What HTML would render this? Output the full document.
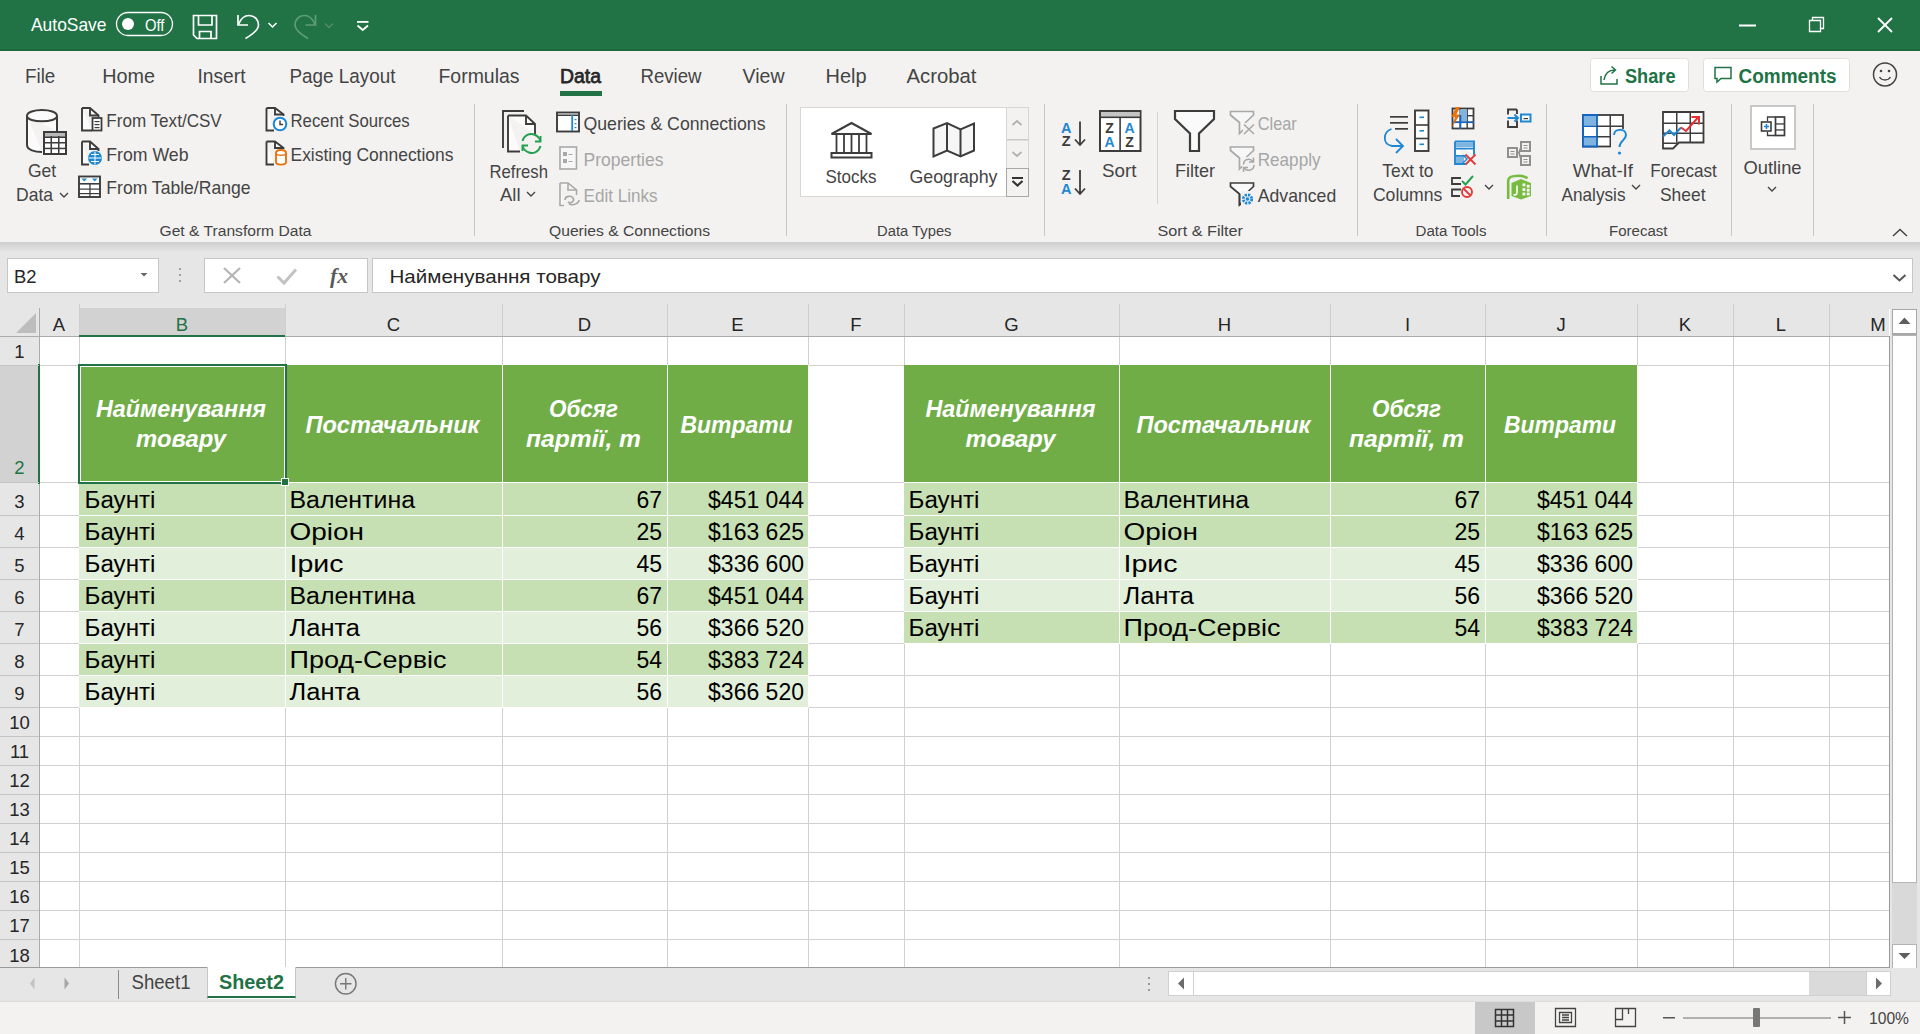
<!DOCTYPE html>
<html><head><meta charset="utf-8"><title>Excel</title>
<style>html,body{margin:0;padding:0;width:1920px;height:1034px;overflow:hidden;background:#fff}
svg{display:block;font-family:"Liberation Sans",sans-serif}</style></head>
<body><svg width="1920" height="1034" viewBox="0 0 1920 1034">
<rect x="0" y="0" width="1920" height="51" fill="#217346" />
<rect x="0" y="49" width="1920" height="2" fill="#1b6a3f" />
<text x="31" y="31" font-size="18.5" fill="#ffffff" textLength="75.5" lengthAdjust="spacingAndGlyphs">AutoSave</text>
<rect x="116.5" y="12.5" width="56" height="23" fill="none" stroke="#ffffff" stroke-width="1.3" rx="11.5" />
<circle cx="128" cy="24" r="6" fill="#ffffff"/>
<text x="145" y="31" font-size="17" fill="#ffffff" textLength="19.5" lengthAdjust="spacingAndGlyphs">Off</text>
<path d="M193.5 15.5 H216.5 V38.5 H197 L193.5 35 Z" stroke="#ffffff" fill="none" stroke-width="1.7" />
<path d="M198.5 15.5 V25 H212 V15.5" stroke="#ffffff" fill="none" stroke-width="1.7" />
<path d="M199.5 38.5 V31.5 H211 V38.5" stroke="#ffffff" fill="none" stroke-width="1.7" />
<path d="M238 15 V25 H248" stroke="#ffffff" fill="none" stroke-width="1.7" />
<path d="M238.5 24.5 C241 18 245 15.5 249 15.5 C255 15.5 258.5 20 258.5 25 C258.5 29 255 33 245.5 38.5" stroke="#ffffff" fill="none" stroke-width="1.7" />
<path d="M268.5 23 L272.5 27 L276.5 23" stroke="#ffffff" fill="none" stroke-width="1.5" />
<path d="M315.5 15 V25 H305.5" stroke="#5e9c77" fill="none" stroke-width="1.7" />
<path d="M315 24.5 C312.5 18 308.5 15.5 304.5 15.5 C298.5 15.5 295 20 295 25 C295 29 298.5 33 308 38.5" stroke="#5e9c77" fill="none" stroke-width="1.7" />
<path d="M325 23.5 L329 27.5 L333 23.5" stroke="#4f8f68" fill="none" stroke-width="1.4" />
<rect x="357" y="21" width="11.5" height="1.8" fill="#ffffff" />
<path d="M357.5 25.5 L362.75 30 L368 25.5" stroke="#ffffff" fill="none" stroke-width="1.8" />
<rect x="1739" y="24.5" width="17" height="2" fill="#ffffff" />
<path d="M1809.5 20.5 H1820.5 V31.5 H1809.5 Z" stroke="#ffffff" fill="none" stroke-width="1.3" />
<path d="M1812.5 20.5 V17.5 H1823.5 V28.5 H1820.5" stroke="#ffffff" fill="none" stroke-width="1.3" />
<path d="M1878 18 L1892 32 M1892 18 L1878 32" stroke="#ffffff" fill="none" stroke-width="1.8" />
<rect x="0" y="51" width="1920" height="191" fill="#f3f2f1" />
<text x="25" y="83" font-size="20.5" fill="#444444" textLength="30.299999999999997" lengthAdjust="spacingAndGlyphs">File</text>
<text x="102.3" y="83" font-size="20.5" fill="#444444" textLength="52.8" lengthAdjust="spacingAndGlyphs">Home</text>
<text x="197.5" y="83" font-size="20.5" fill="#444444" textLength="48.0" lengthAdjust="spacingAndGlyphs">Insert</text>
<text x="289.5" y="83" font-size="20.5" fill="#444444" textLength="106.0" lengthAdjust="spacingAndGlyphs">Page Layout</text>
<text x="438.5" y="83" font-size="20.5" fill="#444444" textLength="81.0" lengthAdjust="spacingAndGlyphs">Formulas</text>
<text x="560" y="83" font-size="20.5" fill="#262626" stroke="#262626" stroke-width="0.75" textLength="41" lengthAdjust="spacingAndGlyphs">Data</text>
<text x="640.5" y="83" font-size="20.5" fill="#444444" textLength="61.0" lengthAdjust="spacingAndGlyphs">Review</text>
<text x="742.5" y="83" font-size="20.5" fill="#444444" textLength="42.0" lengthAdjust="spacingAndGlyphs">View</text>
<text x="825.5" y="83" font-size="20.5" fill="#444444" textLength="41.0" lengthAdjust="spacingAndGlyphs">Help</text>
<text x="906.5" y="83" font-size="20.5" fill="#444444" textLength="70.0" lengthAdjust="spacingAndGlyphs">Acrobat</text>
<rect x="560" y="91" width="42" height="5" fill="#217346" />
<rect x="1590.5" y="58.5" width="98" height="33" fill="#ffffff" stroke="#e1dfdd" stroke-width="1" rx="3" />
<rect x="1703.5" y="58.5" width="146" height="33" fill="#ffffff" stroke="#e1dfdd" stroke-width="1" rx="3" />
<text x="1625" y="83" font-size="20" fill="#217346" font-weight="bold" textLength="50.5" lengthAdjust="spacingAndGlyphs">Share</text>
<text x="1738.5" y="83" font-size="20" fill="#217346" font-weight="bold" textLength="98" lengthAdjust="spacingAndGlyphs">Comments</text>
<path d="M1601 76 V84 H1617 V79" stroke="#217346" fill="none" stroke-width="1.5" />
<path d="M1604 80 C1605 73 1609 70 1615 70 M1611.5 66.5 L1615.5 70 L1611.5 73.5" stroke="#217346" fill="none" stroke-width="1.5" />
<path d="M1715 67.5 H1731 V78.5 H1721 L1717 82 V78.5 H1715 Z" stroke="#217346" fill="none" stroke-width="1.5" />
<circle cx="1885" cy="74.5" r="11.5" fill="none" stroke="#444" stroke-width="1.5"/>
<circle cx="1881" cy="71" r="1.3" fill="#444"/><circle cx="1889" cy="71" r="1.3" fill="#444"/>
<path d="M1879.5 77 C1882 81 1888 81 1890.5 77" stroke="#444" fill="none" stroke-width="1.4" />
<rect x="474" y="104" width="1" height="132" fill="#c8c6c4" />
<rect x="786" y="104" width="1" height="132" fill="#c8c6c4" />
<rect x="1044" y="104" width="1" height="132" fill="#c8c6c4" />
<rect x="1357" y="104" width="1" height="132" fill="#c8c6c4" />
<rect x="1546" y="104" width="1" height="132" fill="#c8c6c4" />
<rect x="1731" y="104" width="1" height="132" fill="#c8c6c4" />
<rect x="1813" y="104" width="1" height="132" fill="#c8c6c4" />
<rect x="1157" y="112" width="1" height="92" fill="#d6d4d2" />
<text x="159.5" y="236" font-size="15.5" fill="#444444" textLength="152" lengthAdjust="spacingAndGlyphs">Get &amp; Transform Data</text>
<text x="549.0" y="236" font-size="15.5" fill="#444444" textLength="161.0" lengthAdjust="spacingAndGlyphs">Queries &amp; Connections</text>
<text x="877.0" y="236" font-size="15.5" fill="#444444" textLength="74.5" lengthAdjust="spacingAndGlyphs">Data Types</text>
<text x="1157.5" y="236" font-size="15.5" fill="#444444" textLength="85.5" lengthAdjust="spacingAndGlyphs">Sort &amp; Filter</text>
<text x="1415.5" y="236" font-size="15.5" fill="#444444" textLength="71" lengthAdjust="spacingAndGlyphs">Data Tools</text>
<text x="1609.0" y="236" font-size="15.5" fill="#444444" textLength="58.5" lengthAdjust="spacingAndGlyphs">Forecast</text>
<path d="M1893 236 L1900 229.5 L1907 236" stroke="#444" fill="none" stroke-width="1.5" />
<text x="16" y="200.5" font-size="19" fill="#444444" textLength="37.0" lengthAdjust="spacingAndGlyphs">Data</text>
<text x="28" y="176.6" font-size="19" fill="#444444" textLength="28.200000000000003" lengthAdjust="spacingAndGlyphs">Get</text>
<path d="M60 193 L64 197 L68 193" stroke="#444444" fill="none" stroke-width="1.4" />
<text x="106.3" y="127" font-size="19" fill="#444444" textLength="115.45" lengthAdjust="spacingAndGlyphs">From Text/CSV</text>
<text x="106.3" y="160.5" font-size="19" fill="#444444" textLength="82.2" lengthAdjust="spacingAndGlyphs">From Web</text>
<text x="106.3" y="194" font-size="19" fill="#444444" textLength="144.2" lengthAdjust="spacingAndGlyphs">From Table/Range</text>
<text x="290.5" y="127" font-size="19" fill="#444444" textLength="119.25" lengthAdjust="spacingAndGlyphs">Recent Sources</text>
<text x="290.5" y="160.5" font-size="19" fill="#444444" textLength="163.0" lengthAdjust="spacingAndGlyphs">Existing Connections</text>
<text x="489.5" y="178" font-size="19" fill="#444444" textLength="58.5" lengthAdjust="spacingAndGlyphs">Refresh</text>
<text x="500" y="201" font-size="19" fill="#444444" textLength="20.5" lengthAdjust="spacingAndGlyphs">All</text>
<path d="M527 192 L531 196 L535 192" stroke="#444444" fill="none" stroke-width="1.4" />
<text x="583.5" y="130" font-size="19" fill="#444444" textLength="182.0" lengthAdjust="spacingAndGlyphs">Queries &amp; Connections</text>
<text x="583.5" y="166" font-size="19" fill="#a6a6a6" textLength="80.0" lengthAdjust="spacingAndGlyphs">Properties</text>
<text x="583.5" y="202" font-size="19" fill="#a6a6a6" textLength="74.0" lengthAdjust="spacingAndGlyphs">Edit Links</text>
<rect x="800.5" y="107.5" width="206" height="89" fill="#ffffff" stroke="#d6d6d6" stroke-width="1" />
<rect x="1006.5" y="107.5" width="22" height="89" fill="#f3f2f1" stroke="#d6d6d6" stroke-width="1" />
<rect x="1007" y="139" width="21" height="1.5" fill="#c8c8c8" />
<rect x="1006.5" y="168.5" width="22" height="28" fill="#f3f2f1" stroke="#a8a8a8" stroke-width="1" />
<path d="M1012.5 125 L1017 121 L1021.5 125" stroke="#b0b0b0" fill="none" stroke-width="1.7" />
<path d="M1012.5 152 L1017 156 L1021.5 152" stroke="#b0b0b0" fill="none" stroke-width="1.7" />
<rect x="1012" y="177" width="11" height="2" fill="#333" />
<path d="M1012.5 181 L1017.5 185.5 L1022.5 181" stroke="#333" fill="none" stroke-width="2.2" />
<text x="825.5" y="182.6" font-size="19" fill="#444444" textLength="51.0" lengthAdjust="spacingAndGlyphs">Stocks</text>
<text x="909.5" y="182.6" font-size="19" fill="#444444" textLength="88.0" lengthAdjust="spacingAndGlyphs">Geography</text>
<text x="1102" y="176.75" font-size="19" fill="#444444" textLength="34.5" lengthAdjust="spacingAndGlyphs">Sort</text>
<text x="1175" y="176.75" font-size="19" fill="#444444" textLength="40.0" lengthAdjust="spacingAndGlyphs">Filter</text>
<text x="1257.75" y="130" font-size="19" fill="#a6a6a6" textLength="39.0" lengthAdjust="spacingAndGlyphs">Clear</text>
<text x="1257.75" y="166" font-size="19" fill="#a6a6a6" textLength="62.75" lengthAdjust="spacingAndGlyphs">Reapply</text>
<text x="1257.75" y="202" font-size="19" fill="#444444" textLength="78.5" lengthAdjust="spacingAndGlyphs">Advanced</text>
<text x="1382.3" y="176.7" font-size="19" fill="#444444" textLength="51.200000000000045" lengthAdjust="spacingAndGlyphs">Text to</text>
<text x="1372.9" y="200.5" font-size="19" fill="#444444" textLength="69.5" lengthAdjust="spacingAndGlyphs">Columns</text>
<path d="M1485 185 L1489 189 L1493 185" stroke="#444444" fill="none" stroke-width="1.4" />
<text x="1572.75" y="177" font-size="19" fill="#444444" textLength="60.25" lengthAdjust="spacingAndGlyphs">What-If</text>
<text x="1561.5" y="201" font-size="19" fill="#444444" textLength="64.0" lengthAdjust="spacingAndGlyphs">Analysis</text>
<path d="M1632 185 L1636 189 L1640 185" stroke="#444444" fill="none" stroke-width="1.4" />
<text x="1650.25" y="177" font-size="19" fill="#444444" textLength="66.5" lengthAdjust="spacingAndGlyphs">Forecast</text>
<text x="1660" y="201" font-size="19" fill="#444444" textLength="45.5" lengthAdjust="spacingAndGlyphs">Sheet</text>
<rect x="1751" y="106" width="44" height="43" fill="#ffffff" stroke="#c8c8c8" stroke-width="2" />
<text x="1743.5" y="174.25" font-size="19" fill="#444444" textLength="58.0" lengthAdjust="spacingAndGlyphs">Outline</text>
<path d="M1768 187 L1772 191 L1776 187" stroke="#444444" fill="none" stroke-width="1.4" />
<path d="M27 116 V145 C27 150 35 152 42 152" stroke="#3c3c3c" fill="#fbfbfb" stroke-width="2" />
<path d="M27 116 C27 108 57 108 57 116 V131" stroke="#3c3c3c" fill="#fbfbfb" stroke-width="2" />
<path d="M27 116 C27 123 57 123 57 116" stroke="#3c3c3c" fill="none" stroke-width="2" />
<rect x="44" y="132" width="22" height="22" fill="#ffffff" stroke="#3c3c3c" stroke-width="2" />
<rect x="45" y="133" width="20" height="4" fill="#b9b9b9" />
<rect x="50.5" y="136" width="1.5" height="18" fill="#3c3c3c" />
<rect x="58" y="136" width="1.5" height="18" fill="#3c3c3c" />
<rect x="44" y="136.5" width="22" height="1.5" fill="#3c3c3c" />
<rect x="44" y="142" width="22" height="1.5" fill="#3c3c3c" />
<rect x="44" y="147.7" width="22" height="1.5" fill="#3c3c3c" />
<path d="M98.5 116 V108 " stroke="none" fill="none" stroke-width="1.5" />
<path d="M82 108 H90 L98.5 115.5 V117 M82 108 V130.5 H92" stroke="#3c3c3c" fill="#fbfbfb" stroke-width="1.9" />
<path d="M90 108 V115.5 H98.5" stroke="#3c3c3c" fill="none" stroke-width="1.9" />
<rect x="92.5" y="118" width="9" height="12.5" fill="#ffffff" stroke="#3c3c3c" stroke-width="1.8" />
<rect x="94.5" y="121" width="5.0" height="1.2" fill="#3c3c3c" />
<rect x="94.5" y="124" width="5.0" height="1.2" fill="#3c3c3c" />
<rect x="94.5" y="127" width="5.0" height="1.2" fill="#3c3c3c" />
<path d="M82 141.5 H90 L98.5 149 V151 M82 141.5 V164.5 H89" stroke="#3c3c3c" fill="#fbfbfb" stroke-width="1.9" />
<path d="M90 141.5 V149 H98.5" stroke="#3c3c3c" fill="none" stroke-width="1.9" />
<circle cx="95" cy="158" r="7" fill="#1e88d2"/>
<path d="M88.5 158 H101.5 M95 151.5 V164.5 M91 154.5 H99 M91 161.5 H99" stroke="#ffffff" fill="none" stroke-width="1" />
<rect x="79" y="176.5" width="21" height="20.5" fill="#ffffff" stroke="#3c3c3c" stroke-width="1.9" />
<rect x="79" y="183" width="21" height="1.6" fill="#3c3c3c" />
<rect x="79" y="188.5" width="21" height="1.2" fill="#3c3c3c" />
<rect x="79" y="193" width="21" height="1.2" fill="#3c3c3c" />
<rect x="89.3" y="183" width="1.3" height="14" fill="#3c3c3c" />
<path d="M81.5 178.5 H87 L84.25 181.5 Z" stroke="none" fill="#1e88d2" stroke-width="1.5" />
<path d="M92 178.5 H97.5 L94.75 181.5 Z" stroke="none" fill="#1e88d2" stroke-width="1.5" />
<path d="M266.5 108 H275 L283.5 114.5 V116 M266.5 108 V130.5 H274" stroke="#3c3c3c" fill="#fbfbfb" stroke-width="1.9" />
<path d="M275 108 V114.5 H283.5" stroke="#3c3c3c" fill="none" stroke-width="1.9" />
<circle cx="280" cy="124" r="6.3" fill="#ffffff" stroke="#1e88d2" stroke-width="2"/>
<path d="M280 120.5 V124.5 H283" stroke="#3c3c3c" fill="none" stroke-width="1.4" />
<path d="M266.5 141.5 H275 L283.5 148 V149 M266.5 141.5 V164.5 H274" stroke="#3c3c3c" fill="#fbfbfb" stroke-width="1.9" />
<path d="M275 141.5 V148 H283.5" stroke="#3c3c3c" fill="none" stroke-width="1.9" />
<path d="M276 153 C276 149 286 149 286 153 V162 C286 165.5 276 165.5 276 162 Z" stroke="#e8730f" fill="#ffffff" stroke-width="1.9" />
<path d="M276 153 C276 156 286 156 286 153" stroke="#e8730f" fill="none" stroke-width="1.5" />
<path d="M503 148 V111 H524" stroke="#3c3c3c" fill="none" stroke-width="1.9" />
<path d="M508 115.5 H526 L535 124 V134 M508 115.5 V151.5 H520" stroke="#3c3c3c" fill="#fbfbfb" stroke-width="1.9" />
<path d="M526 115.5 V124 H535" stroke="#3c3c3c" fill="none" stroke-width="1.9" />
<circle cx="531.5" cy="143.5" r="9.5" fill="#f3f2f1"/>
<path d="M522.5 141 C524 135 530 133 534 134.5 C537 135.5 539.5 138 540.5 141" stroke="#23a04f" fill="none" stroke-width="1.9" />
<path d="M540.5 136 V141.5 H535" stroke="#23a04f" fill="none" stroke-width="1.9" />
<path d="M540.5 146 C539 152 533 154 529 152.5 C526 151.5 523.5 149 522.5 146" stroke="#23a04f" fill="none" stroke-width="1.9" />
<path d="M522.5 151 V145.5 H528" stroke="#23a04f" fill="none" stroke-width="1.9" />
<rect x="557" y="112.5" width="22" height="19" fill="#ffffff" stroke="#3c3c3c" stroke-width="1.9" />
<rect x="557" y="114.5" width="22" height="1.5" fill="#3c3c3c" />
<rect x="571.3" y="115" width="1.8" height="16" fill="#1e88d2" />
<rect x="574.5" y="119" width="2" height="1.2" fill="#1e88d2" />
<rect x="574.5" y="123" width="2" height="1.2" fill="#1e88d2" />
<rect x="574.5" y="127" width="2" height="1.2" fill="#1e88d2" />
<rect x="560" y="147" width="16.5" height="22" fill="#f7f7f7" stroke="#a8a8a8" stroke-width="1.6" />
<rect x="563" y="152" width="4" height="4" fill="#a8a8a8" />
<rect x="563" y="159" width="4" height="4" fill="#a8a8a8" />
<rect x="568.5" y="154" width="4.0" height="1" fill="#a8a8a8" />
<rect x="568.5" y="161" width="4.0" height="1" fill="#a8a8a8" />
<path d="M560 183 H568 L576.5 190 V195 M560 183 V205.5 H564" stroke="#a8a8a8" fill="#f7f7f7" stroke-width="1.6" />
<path d="M568 183 V190 H576.5" stroke="#a8a8a8" fill="none" stroke-width="1.6" />
<path d="M565 200 C565 196 571 195 573 198 C575 201 571 204 568 202 M569 204 C574 206 579 203 579 200" stroke="#a8a8a8" fill="none" stroke-width="1.6" />
<path d="M831.5 134 L851.5 123 L871.5 134 Z" stroke="#3c3c3c" fill="#ffffff" stroke-width="2" />
<rect x="835.6" y="135" width="1.8" height="17.5" fill="#3c3c3c" />
<rect x="843.1" y="135" width="1.8" height="17.5" fill="#3c3c3c" />
<rect x="850.6" y="135" width="1.8" height="17.5" fill="#3c3c3c" />
<rect x="858.1" y="135" width="1.8" height="17.5" fill="#3c3c3c" />
<rect x="865.6" y="135" width="1.8" height="17.5" fill="#3c3c3c" />
<path d="M831.5 153 H871.5 V157.5 H831.5 Z" stroke="#3c3c3c" fill="#ffffff" stroke-width="2" />
<path d="M933.5 128.5 L947 123 L960.5 129.5 L974 123.5 V150.5 L960.5 156.5 L947 150.5 L933.5 156.5 Z" stroke="#3c3c3c" fill="#f6f6f6" stroke-width="2" />
<path d="M947 123 V150.5 M960.5 129.5 V156.5" stroke="#3c3c3c" fill="none" stroke-width="2" />
<text x="1066.3" y="132.6" font-size="14.5" fill="#1e88d2" font-weight="bold" text-anchor="middle">A</text>
<text x="1066.3" y="145.5" font-size="14.5" fill="#3c3c3c" font-weight="bold" text-anchor="middle">Z</text>
<path d="M1080 121.5 V145 M1075 139.5 L1080 145 L1085 139.5" stroke="#3c3c3c" fill="none" stroke-width="1.8" />
<text x="1066.3" y="180.4" font-size="14.5" fill="#3c3c3c" font-weight="bold" text-anchor="middle">Z</text>
<text x="1066.3" y="193.7" font-size="14.5" fill="#1e88d2" font-weight="bold" text-anchor="middle">A</text>
<path d="M1080 170 V194 M1075 188.5 L1080 194 L1085 188.5" stroke="#3c3c3c" fill="none" stroke-width="1.8" />
<rect x="1100" y="111" width="40.5" height="40" fill="#ffffff" stroke="#3c3c3c" stroke-width="2" />
<rect x="1101" y="112" width="38.5" height="5" fill="#c4c4c4" />
<rect x="1100" y="116.5" width="41" height="1.6" fill="#3c3c3c" />
<rect x="1119.3" y="117" width="1.6" height="34" fill="#3c3c3c" />
<text x="1109.5" y="132.5" font-size="14" fill="#3c3c3c" font-weight="bold" text-anchor="middle">Z</text>
<text x="1109.5" y="147.3" font-size="14" fill="#1e88d2" font-weight="bold" text-anchor="middle">A</text>
<text x="1129.5" y="132.5" font-size="14" fill="#1e88d2" font-weight="bold" text-anchor="middle">A</text>
<text x="1129.5" y="147.3" font-size="14" fill="#3c3c3c" font-weight="bold" text-anchor="middle">Z</text>
<path d="M1175 111 H1214 V119 L1199 133.5 V151 H1190 V133.5 L1175 119 Z" stroke="#3c3c3c" fill="#fafafa" stroke-width="2.2" />
<path d="M1230.5 111.5 H1253.5 V115.0 L1245.5 122.5 V127.5 L1239.5 133.5 V122.5 L1230.5 115.0 Z" stroke="#a8a8a8" fill="#f7f7f7" stroke-width="1.7" />
<rect x="1243" y="123" width="12" height="12" fill="#f3f2f1" />
<path d="M1244 124.5 L1254 134 M1254 124.5 L1244 134" stroke="#a8a8a8" fill="none" stroke-width="1.6" />
<path d="M1230.5 147 H1253.5 V150.5 L1245.5 158 V163 L1239.5 169 V158 L1230.5 150.5 Z" stroke="#a8a8a8" fill="#f7f7f7" stroke-width="1.7" />
<rect x="1242" y="157" width="13" height="14" fill="#f3f2f1" />
<path d="M1243.5 164.5 C1243.5 159 1250 157.5 1253 161.5 M1253.5 157.5 V162 H1249" stroke="#a8a8a8" fill="none" stroke-width="1.5" />
<path d="M1254 165 C1254 170.5 1247 172 1244 168 M1243.5 172 V167.5 H1248" stroke="#a8a8a8" fill="none" stroke-width="1.5" />
<path d="M1230.5 183 H1253.5 V186.5 L1245.5 194 V199 L1239.5 205 V194 L1230.5 186.5 Z" stroke="#3c3c3c" fill="#fafafa" stroke-width="1.7" />
<rect x="1241" y="191" width="14" height="15" fill="#f3f2f1"/>
<path d="M1239.5 194 V205.5" stroke="#3c3c3c" fill="none" stroke-width="1.7" />
<circle cx="1247.5" cy="199" r="4.2" fill="none" stroke="#1e88d2" stroke-width="2.8" stroke-dasharray="2.2 1.1"/>
<circle cx="1247.5" cy="199" r="1.8" fill="#1e88d2"/>
<rect x="1390" y="116" width="18" height="1.7" fill="#3c3c3c" />
<rect x="1390" y="122" width="18" height="1.7" fill="#3c3c3c" />
<rect x="1395" y="128" width="13" height="1.7" fill="#3c3c3c" />
<rect x="1415" y="110.5" width="13.5" height="40.5" fill="#ffffff" stroke="#3c3c3c" stroke-width="1.9" />
<rect x="1415" y="124.2" width="13.5" height="1.6" fill="#3c3c3c" />
<rect x="1415" y="137.7" width="13.5" height="1.6" fill="#3c3c3c" />
<rect x="1419.5" y="116.5" width="4.5" height="1.6" fill="#1e88d2" />
<rect x="1419.5" y="130" width="4.5" height="1.6" fill="#1e88d2" />
<rect x="1419.5" y="143.5" width="4.5" height="1.6" fill="#1e88d2" />
<path d="M1391.5 129 C1383 132 1382 144 1392 146 H1402.5" stroke="#1e88d2" fill="none" stroke-width="1.8" />
<path d="M1396 139 L1403 146 L1396 153" stroke="#1e88d2" fill="none" stroke-width="1.8" />
<rect x="1452.5" y="108.5" width="21" height="20" fill="#ffffff" stroke="#3c3c3c" stroke-width="1.8" />
<rect x="1459.5" y="108" width="1.4" height="21" fill="#3c3c3c" />
<rect x="1466.5" y="108" width="1.4" height="21" fill="#3c3c3c" />
<rect x="1452" y="115" width="22" height="1.4" fill="#3c3c3c" />
<rect x="1452" y="121.5" width="22" height="1.4" fill="#3c3c3c" />
<path d="M1460 109.5 H1467 V121.5 H1460 Z" stroke="none" fill="#7fb3e0" stroke-width="1.5" />
<rect x="1459.5" y="115" width="1.8" height="14" fill="#1565c0" />
<rect x="1452" y="121.5" width="22" height="1.6" fill="#1565c0" />
<path d="M1456 107 L1451.5 117 H1455 L1452 127 L1460 114.5 H1456.5 L1460 107 Z" stroke="none" fill="#e8730f" stroke-width="1.5" />
<path d="M1455 141.5 H1474 V155 M1455 141.5 V164 H1466" stroke="#1e88d2" fill="#ffffff" stroke-width="1.9" />
<rect x="1456" y="142.5" width="17" height="5" fill="#7fb3e0" />
<rect x="1456" y="155" width="8" height="8" fill="#7fb3e0" />
<rect x="1455" y="148" width="19" height="1.5" fill="#1e88d2" />
<rect x="1455" y="155" width="11" height="1.5" fill="#1e88d2" />
<path d="M1463 155 L1467 159 L1463 163" stroke="#1e88d2" fill="none" stroke-width="1.4" />
<path d="M1465.5 154.5 L1475.5 164.5 M1475.5 154.5 L1465.5 164.5" stroke="#e23b3b" fill="none" stroke-width="1.8" />
<path d="M1461 178 H1452 V184 H1461 M1461 189.5 H1452 V196 H1460" stroke="#3c3c3c" fill="none" stroke-width="1.8" />
<path d="M1462 181 L1465.5 184.5 L1473 176" stroke="#23a04f" fill="none" stroke-width="1.9" />
<circle cx="1467" cy="192" r="5" fill="none" stroke="#e23b3b" stroke-width="1.9"/>
<path d="M1463.5 188.5 L1470.5 195.5" stroke="#e23b3b" fill="none" stroke-width="1.8" />
<path d="M1517 109.5 H1508 V114.5 M1508 120.5 V127 H1517 V120.5 M1517 109.5 V114" stroke="#3c3c3c" fill="none" stroke-width="1.9" />
<path d="M1507.5 118 H1518 M1514.5 114.5 L1518 118 L1514.5 121.5" stroke="#1e88d2" fill="none" stroke-width="2" />
<rect x="1521" y="114.5" width="9.5" height="7" fill="#ffffff" stroke="#1e88d2" stroke-width="2" />
<rect x="1523.5" y="118" width="4.5" height="1.2" fill="#3c3c3c" />
<rect x="1508" y="148" width="9" height="9" fill="none" stroke="#8f8f8f" stroke-width="2" />
<rect x="1521" y="142" width="9" height="9" fill="none" stroke="#8f8f8f" stroke-width="2" />
<rect x="1521" y="156" width="9" height="9" fill="none" stroke="#8f8f8f" stroke-width="2" />
<path d="M1517 152.5 H1519 L1521 147 M1519 152.5 L1521 160" stroke="#8f8f8f" fill="none" stroke-width="1.6" />
<rect x="1510.5" y="151" width="4.0" height="1" fill="#8f8f8f" />
<rect x="1510.5" y="153.5" width="4.0" height="1" fill="#8f8f8f" />
<rect x="1523.5" y="145" width="4.0" height="1" fill="#8f8f8f" />
<rect x="1523.5" y="147.5" width="4.0" height="1" fill="#8f8f8f" />
<rect x="1523.5" y="159" width="4.0" height="1" fill="#8f8f8f" />
<rect x="1523.5" y="161.5" width="4.0" height="1" fill="#8f8f8f" />
<path d="M1508.2 199 V180.5 C1508.2 177 1513 175.8 1518.5 175.8 C1522.5 175.8 1525.5 176.8 1527.5 178.2" stroke="#77bb41" fill="none" stroke-width="2.6" />
<path d="M1511.5 183 L1521 179 L1531 183 V196 L1521 199.5 L1511.5 196 Z" stroke="none" fill="#77bb41" stroke-width="1.5" />
<rect x="1522.5" y="183.5" width="2.8" height="2.8" fill="#ffffff" />
<rect x="1526.8" y="184.8" width="2.8" height="2.8" fill="#ffffff" />
<rect x="1522.5" y="188.2" width="2.8" height="2.8" fill="#ffffff" />
<rect x="1526.8" y="188.8" width="2.8" height="2.8" fill="#ffffff" />
<rect x="1522.5" y="192.6" width="2.8" height="2.8" fill="#ffffff" />
<rect x="1526.8" y="192.6" width="2.8" height="2.8" fill="#ffffff" />
<path d="M1517 185.5 V192.5 C1517 195 1514.5 195.5 1513.5 194.5" stroke="#ffffff" fill="none" stroke-width="1.6" />
<rect x="1583" y="115" width="40" height="31.5" fill="#ffffff" stroke="#3c3c3c" stroke-width="1.8" />
<rect x="1583" y="115" width="14" height="10.5" fill="#7fb3e0" />
<rect x="1583" y="136" width="14" height="10.5" fill="#7fb3e0" />
<path d="M1583 115 H1597 V146.5 H1583 Z" stroke="#1565c0" fill="none" stroke-width="1.8" />
<rect x="1597" y="125.5" width="26" height="1.5" fill="#3c3c3c" />
<rect x="1597" y="136" width="26" height="1.5" fill="#3c3c3c" />
<rect x="1609.5" y="115" width="1.5" height="31.5" fill="#3c3c3c" />
<rect x="1583" y="125.5" width="14" height="1.5" fill="#1565c0" />
<rect x="1583" y="136" width="14" height="1.5" fill="#1565c0" />
<rect x="1611" y="129" width="17" height="27" fill="#f3f2f1"/>
<path d="M1614 135 C1614 128 1626 128 1626 135 C1626 140 1619.5 141 1619.5 147" stroke="#1e88d2" fill="none" stroke-width="2" />
<circle cx="1619.5" cy="153" r="1.6" fill="#1e88d2"/>
<path d="M1663 112 H1703.5 V142.5 H1679 L1673 148.5 H1663 Z" stroke="#3c3c3c" fill="#ffffff" stroke-width="1.8" />
<rect x="1676" y="112" width="1.5" height="30.5" fill="#3c3c3c" />
<rect x="1689.5" y="112" width="1.5" height="30.5" fill="#3c3c3c" />
<rect x="1663" y="122.5" width="40.5" height="1.5" fill="#3c3c3c" />
<rect x="1663" y="132.5" width="40.5" height="1.5" fill="#3c3c3c" />
<rect x="1663" y="142.5" width="16" height="1.5" fill="#3c3c3c" />
<path d="M1663 136.5 L1669.5 130.5 L1674 135 L1681 127.5" stroke="#1e88d2" fill="none" stroke-width="2" />
<path d="M1681 127.5 L1686 131 L1698 117.5" stroke="#e83030" fill="none" stroke-width="2" />
<path d="M1691.5 117 H1699 V124.5" stroke="#e83030" fill="none" stroke-width="2" />
<rect x="1761.5" y="122" width="9.5" height="9" fill="#ffffff" stroke="#3c3c3c" stroke-width="1.6" />
<path d="M1764 126.5 H1769 M1766.5 124 V129" stroke="#1e88d2" fill="none" stroke-width="1.6" />
<path d="M1775 117 H1767.5 V121 M1767.5 132 V135.5 H1775" stroke="#3c3c3c" fill="none" stroke-width="1.3" />
<rect x="1775.5" y="117" width="9" height="18.5" fill="#ffffff" stroke="#3c3c3c" stroke-width="1.7" />
<rect x="1775" y="123.3" width="10" height="1.3" fill="#3c3c3c" />
<rect x="1775" y="129.3" width="10" height="1.3" fill="#3c3c3c" />
<rect x="0" y="242" width="1920" height="67" fill="#e6e6e6" />
<defs><linearGradient id="sh" x1="0" y1="0" x2="0" y2="1"><stop offset="0" stop-color="#cfcfcf"/><stop offset="1" stop-color="#e6e6e6"/></linearGradient></defs>
<rect x="0" y="242" width="1920" height="11" fill="url(#sh)" />
<rect x="7.5" y="258.5" width="151" height="34" fill="#ffffff" stroke="#c6c6c6" stroke-width="1" />
<rect x="204.5" y="258.5" width="163" height="34" fill="#ffffff" stroke="#c6c6c6" stroke-width="1" />
<rect x="372.5" y="258.5" width="1540" height="34" fill="#ffffff" stroke="#c6c6c6" stroke-width="1" />
<text x="14" y="283" font-size="18" fill="#262626" textLength="22.5" lengthAdjust="spacingAndGlyphs">B2</text>
<path d="M140.5 273 H147.5 L144 276.5 Z" stroke="none" fill="#666" stroke-width="1.5" />
<rect x="179" y="268" width="2" height="2" fill="#a0a0a0" />
<rect x="179" y="274" width="2" height="2" fill="#a0a0a0" />
<rect x="179" y="280" width="2" height="2" fill="#a0a0a0" />
<path d="M224 268 L240 283 M240 268 L224 283" stroke="#b4b4b4" fill="none" stroke-width="2.2" />
<path d="M277.5 276.5 L284 283 L296 269.5" stroke="#c2c2c2" fill="none" stroke-width="3" />
<text x="330" y="283" font-size="21" fill="#5a5a5a" font-family="Liberation Serif" font-weight="bold" font-style="italic" textLength="18" lengthAdjust="spacingAndGlyphs">fx</text>
<text x="389.5" y="283" font-size="18.5" fill="#262626" textLength="211" lengthAdjust="spacingAndGlyphs">Найменування товару</text>
<path d="M1893.5 275 L1899.5 280.5 L1905.5 275" stroke="#555" fill="none" stroke-width="2" />
<rect x="40" y="337" width="1849" height="630" fill="#ffffff" />
<rect x="0" y="308" width="1889" height="28" fill="#e6e6e6" />
<rect x="80" y="308" width="205" height="28" fill="#d2d2d2" />
<path d="M16 333 L36 313 L36 333 Z" stroke="none" fill="#bdbdbd" stroke-width="1.5" />
<rect x="79" y="304" width="1" height="32" fill="#cfcfcf" />
<rect x="285" y="304" width="1" height="32" fill="#cfcfcf" />
<rect x="502" y="304" width="1" height="32" fill="#cfcfcf" />
<rect x="667" y="304" width="1" height="32" fill="#cfcfcf" />
<rect x="808" y="304" width="1" height="32" fill="#cfcfcf" />
<rect x="904" y="304" width="1" height="32" fill="#cfcfcf" />
<rect x="1119" y="304" width="1" height="32" fill="#cfcfcf" />
<rect x="1330" y="304" width="1" height="32" fill="#cfcfcf" />
<rect x="1485" y="304" width="1" height="32" fill="#cfcfcf" />
<rect x="1637" y="304" width="1" height="32" fill="#cfcfcf" />
<rect x="1733" y="304" width="1" height="32" fill="#cfcfcf" />
<rect x="1829" y="304" width="1" height="32" fill="#cfcfcf" />
<rect x="39" y="308" width="1" height="659" fill="#ababab" />
<rect x="0" y="336" width="1889" height="1" fill="#ababab" />
<text x="59.0" y="330.5" font-size="18.5" fill="#262626" text-anchor="middle">A</text>
<text x="182.0" y="330.5" font-size="18.5" fill="#217346" text-anchor="middle">B</text>
<text x="393.5" y="330.5" font-size="18.5" fill="#262626" text-anchor="middle">C</text>
<text x="584.5" y="330.5" font-size="18.5" fill="#262626" text-anchor="middle">D</text>
<text x="737.5" y="330.5" font-size="18.5" fill="#262626" text-anchor="middle">E</text>
<text x="856.0" y="330.5" font-size="18.5" fill="#262626" text-anchor="middle">F</text>
<text x="1011.5" y="330.5" font-size="18.5" fill="#262626" text-anchor="middle">G</text>
<text x="1224.5" y="330.5" font-size="18.5" fill="#262626" text-anchor="middle">H</text>
<text x="1407.5" y="330.5" font-size="18.5" fill="#262626" text-anchor="middle">I</text>
<text x="1561.0" y="330.5" font-size="18.5" fill="#262626" text-anchor="middle">J</text>
<text x="1685.0" y="330.5" font-size="18.5" fill="#262626" text-anchor="middle">K</text>
<text x="1781.0" y="330.5" font-size="18.5" fill="#262626" text-anchor="middle">L</text>
<text x="1878" y="330.5" font-size="18.5" fill="#262626" text-anchor="middle">M</text>
<rect x="79" y="335" width="206" height="2" fill="#217346" />
<rect x="0" y="337" width="39" height="630" fill="#e6e6e6" />
<rect x="0" y="366" width="39" height="116" fill="#d2d2d2" />
<rect x="38" y="364" width="2" height="120" fill="#217346" />
<rect x="0" y="365" width="39" height="1" fill="#c4c4c4" />
<text x="19.5" y="357.5" font-size="18.5" fill="#262626" text-anchor="middle">1</text>
<rect x="0" y="482" width="39" height="1" fill="#c4c4c4" />
<text x="19.5" y="474" font-size="18.5" fill="#217346" text-anchor="middle">2</text>
<rect x="0" y="515" width="39" height="1" fill="#c4c4c4" />
<text x="19.5" y="507.5" font-size="18.5" fill="#262626" text-anchor="middle">3</text>
<rect x="0" y="547" width="39" height="1" fill="#c4c4c4" />
<text x="19.5" y="539.5" font-size="18.5" fill="#262626" text-anchor="middle">4</text>
<rect x="0" y="579" width="39" height="1" fill="#c4c4c4" />
<text x="19.5" y="571.5" font-size="18.5" fill="#262626" text-anchor="middle">5</text>
<rect x="0" y="611" width="39" height="1" fill="#c4c4c4" />
<text x="19.5" y="603.5" font-size="18.5" fill="#262626" text-anchor="middle">6</text>
<rect x="0" y="643" width="39" height="1" fill="#c4c4c4" />
<text x="19.5" y="635.5" font-size="18.5" fill="#262626" text-anchor="middle">7</text>
<rect x="0" y="675" width="39" height="1" fill="#c4c4c4" />
<text x="19.5" y="667.5" font-size="18.5" fill="#262626" text-anchor="middle">8</text>
<rect x="0" y="707" width="39" height="1" fill="#c4c4c4" />
<text x="19.5" y="699.5" font-size="18.5" fill="#262626" text-anchor="middle">9</text>
<rect x="0" y="736" width="39" height="1" fill="#c4c4c4" />
<text x="19.5" y="728.5" font-size="18.5" fill="#262626" text-anchor="middle">10</text>
<rect x="0" y="765" width="39" height="1" fill="#c4c4c4" />
<text x="19.5" y="757.5" font-size="18.5" fill="#262626" text-anchor="middle">11</text>
<rect x="0" y="794" width="39" height="1" fill="#c4c4c4" />
<text x="19.5" y="786.5" font-size="18.5" fill="#262626" text-anchor="middle">12</text>
<rect x="0" y="823" width="39" height="1" fill="#c4c4c4" />
<text x="19.5" y="815.5" font-size="18.5" fill="#262626" text-anchor="middle">13</text>
<rect x="0" y="852" width="39" height="1" fill="#c4c4c4" />
<text x="19.5" y="844.5" font-size="18.5" fill="#262626" text-anchor="middle">14</text>
<rect x="0" y="881" width="39" height="1" fill="#c4c4c4" />
<text x="19.5" y="873.5" font-size="18.5" fill="#262626" text-anchor="middle">15</text>
<rect x="0" y="910" width="39" height="1" fill="#c4c4c4" />
<text x="19.5" y="902.5" font-size="18.5" fill="#262626" text-anchor="middle">16</text>
<rect x="0" y="939" width="39" height="1" fill="#c4c4c4" />
<text x="19.5" y="931.5" font-size="18.5" fill="#262626" text-anchor="middle">17</text>
<text x="19.5" y="962" font-size="18.5" fill="#262626" text-anchor="middle">18</text>
<rect x="40" y="365" width="1849" height="1" fill="#d0d0d0" />
<rect x="40" y="482" width="1849" height="1" fill="#d0d0d0" />
<rect x="40" y="515" width="1849" height="1" fill="#d0d0d0" />
<rect x="40" y="547" width="1849" height="1" fill="#d0d0d0" />
<rect x="40" y="579" width="1849" height="1" fill="#d0d0d0" />
<rect x="40" y="611" width="1849" height="1" fill="#d0d0d0" />
<rect x="40" y="643" width="1849" height="1" fill="#d0d0d0" />
<rect x="40" y="675" width="1849" height="1" fill="#d0d0d0" />
<rect x="40" y="707" width="1849" height="1" fill="#d0d0d0" />
<rect x="40" y="736" width="1849" height="1" fill="#d0d0d0" />
<rect x="40" y="765" width="1849" height="1" fill="#d0d0d0" />
<rect x="40" y="794" width="1849" height="1" fill="#d0d0d0" />
<rect x="40" y="823" width="1849" height="1" fill="#d0d0d0" />
<rect x="40" y="852" width="1849" height="1" fill="#d0d0d0" />
<rect x="40" y="881" width="1849" height="1" fill="#d0d0d0" />
<rect x="40" y="910" width="1849" height="1" fill="#d0d0d0" />
<rect x="40" y="939" width="1849" height="1" fill="#d0d0d0" />
<rect x="79" y="337" width="1" height="630" fill="#d0d0d0" />
<rect x="285" y="337" width="1" height="630" fill="#d0d0d0" />
<rect x="502" y="337" width="1" height="630" fill="#d0d0d0" />
<rect x="667" y="337" width="1" height="630" fill="#d0d0d0" />
<rect x="808" y="337" width="1" height="630" fill="#d0d0d0" />
<rect x="904" y="337" width="1" height="630" fill="#d0d0d0" />
<rect x="1119" y="337" width="1" height="630" fill="#d0d0d0" />
<rect x="1330" y="337" width="1" height="630" fill="#d0d0d0" />
<rect x="1485" y="337" width="1" height="630" fill="#d0d0d0" />
<rect x="1637" y="337" width="1" height="630" fill="#d0d0d0" />
<rect x="1733" y="337" width="1" height="630" fill="#d0d0d0" />
<rect x="1829" y="337" width="1" height="630" fill="#d0d0d0" />
<rect x="79" y="365" width="729" height="117" fill="#70ad47" />
<rect x="79" y="482" width="729" height="33" fill="#c6e0b4" />
<rect x="79" y="515" width="729" height="32" fill="#c6e0b4" />
<rect x="79" y="547" width="729" height="32" fill="#e2efda" />
<rect x="79" y="579" width="729" height="32" fill="#c6e0b4" />
<rect x="79" y="611" width="729" height="32" fill="#e2efda" />
<rect x="79" y="643" width="729" height="32" fill="#c6e0b4" />
<rect x="79" y="675" width="729" height="32" fill="#e2efda" />
<rect x="79" y="515" width="730" height="1" fill="#ffffff" />
<rect x="79" y="547" width="730" height="1" fill="#ffffff" />
<rect x="79" y="579" width="730" height="1" fill="#ffffff" />
<rect x="79" y="611" width="730" height="1" fill="#ffffff" />
<rect x="79" y="643" width="730" height="1" fill="#ffffff" />
<rect x="79" y="675" width="730" height="1" fill="#ffffff" />
<rect x="79" y="707" width="730" height="1" fill="#ffffff" />
<rect x="79" y="482" width="730" height="1" fill="#ffffff" />
<rect x="285" y="365" width="1" height="342" fill="#ffffff" />
<rect x="502" y="365" width="1" height="342" fill="#ffffff" />
<rect x="667" y="365" width="1" height="342" fill="#ffffff" />
<rect x="808" y="365" width="1" height="342" fill="#ffffff" />
<text x="84.5" y="508.2" font-size="23" fill="#000000" textLength="71" lengthAdjust="spacingAndGlyphs">Баунті</text>
<text x="289.5" y="508.2" font-size="23" fill="#000000" textLength="125.5" lengthAdjust="spacingAndGlyphs">Валентина</text>
<text x="662" y="508.2" font-size="23" fill="#000000" text-anchor="end">67</text>
<text x="804" y="508.2" font-size="23" fill="#000000" text-anchor="end">$451 044</text>
<text x="84.5" y="540.2" font-size="23" fill="#000000" textLength="71" lengthAdjust="spacingAndGlyphs">Баунті</text>
<text x="289.5" y="540.2" font-size="23" fill="#000000" textLength="74.5" lengthAdjust="spacingAndGlyphs">Оріон</text>
<text x="662" y="540.2" font-size="23" fill="#000000" text-anchor="end">25</text>
<text x="804" y="540.2" font-size="23" fill="#000000" text-anchor="end">$163 625</text>
<text x="84.5" y="572.2" font-size="23" fill="#000000" textLength="71" lengthAdjust="spacingAndGlyphs">Баунті</text>
<text x="289.5" y="572.2" font-size="23" fill="#000000" textLength="54" lengthAdjust="spacingAndGlyphs">Ірис</text>
<text x="662" y="572.2" font-size="23" fill="#000000" text-anchor="end">45</text>
<text x="804" y="572.2" font-size="23" fill="#000000" text-anchor="end">$336 600</text>
<text x="84.5" y="604.2" font-size="23" fill="#000000" textLength="71" lengthAdjust="spacingAndGlyphs">Баунті</text>
<text x="289.5" y="604.2" font-size="23" fill="#000000" textLength="125.5" lengthAdjust="spacingAndGlyphs">Валентина</text>
<text x="662" y="604.2" font-size="23" fill="#000000" text-anchor="end">67</text>
<text x="804" y="604.2" font-size="23" fill="#000000" text-anchor="end">$451 044</text>
<text x="84.5" y="636.2" font-size="23" fill="#000000" textLength="71" lengthAdjust="spacingAndGlyphs">Баунті</text>
<text x="289.5" y="636.2" font-size="23" fill="#000000" textLength="70.5" lengthAdjust="spacingAndGlyphs">Ланта</text>
<text x="662" y="636.2" font-size="23" fill="#000000" text-anchor="end">56</text>
<text x="804" y="636.2" font-size="23" fill="#000000" text-anchor="end">$366 520</text>
<text x="84.5" y="668.2" font-size="23" fill="#000000" textLength="71" lengthAdjust="spacingAndGlyphs">Баунті</text>
<text x="289.5" y="668.2" font-size="23" fill="#000000" textLength="157" lengthAdjust="spacingAndGlyphs">Прод-Сервіс</text>
<text x="662" y="668.2" font-size="23" fill="#000000" text-anchor="end">54</text>
<text x="804" y="668.2" font-size="23" fill="#000000" text-anchor="end">$383 724</text>
<text x="84.5" y="700.2" font-size="23" fill="#000000" textLength="71" lengthAdjust="spacingAndGlyphs">Баунті</text>
<text x="289.5" y="700.2" font-size="23" fill="#000000" textLength="70.5" lengthAdjust="spacingAndGlyphs">Ланта</text>
<text x="662" y="700.2" font-size="23" fill="#000000" text-anchor="end">56</text>
<text x="804" y="700.2" font-size="23" fill="#000000" text-anchor="end">$366 520</text>
<text x="181.0" y="416.7" font-size="23.5" fill="#ffffff" font-weight="bold" font-style="italic" text-anchor="middle" textLength="170" lengthAdjust="spacingAndGlyphs">Найменування</text>
<text x="181.0" y="447.3" font-size="23.5" fill="#ffffff" font-weight="bold" font-style="italic" text-anchor="middle" textLength="90" lengthAdjust="spacingAndGlyphs">товару</text>
<text x="392.5" y="432.5" font-size="23.5" fill="#ffffff" font-weight="bold" font-style="italic" text-anchor="middle" textLength="174" lengthAdjust="spacingAndGlyphs">Постачальник</text>
<text x="583.5" y="416.7" font-size="23.5" fill="#ffffff" font-weight="bold" font-style="italic" text-anchor="middle" textLength="69" lengthAdjust="spacingAndGlyphs">Обсяг</text>
<text x="583.5" y="447.3" font-size="23.5" fill="#ffffff" font-weight="bold" font-style="italic" text-anchor="middle" textLength="115" lengthAdjust="spacingAndGlyphs">партії, т</text>
<text x="736.5" y="432.5" font-size="23.5" fill="#ffffff" font-weight="bold" font-style="italic" text-anchor="middle" textLength="112" lengthAdjust="spacingAndGlyphs">Витрати</text>
<rect x="904" y="365" width="733" height="117" fill="#70ad47" />
<rect x="904" y="482" width="733" height="33" fill="#c6e0b4" />
<rect x="904" y="515" width="733" height="32" fill="#c6e0b4" />
<rect x="904" y="547" width="733" height="32" fill="#e2efda" />
<rect x="904" y="579" width="733" height="32" fill="#e2efda" />
<rect x="904" y="611" width="733" height="32" fill="#c6e0b4" />
<rect x="904" y="515" width="734" height="1" fill="#ffffff" />
<rect x="904" y="547" width="734" height="1" fill="#ffffff" />
<rect x="904" y="579" width="734" height="1" fill="#ffffff" />
<rect x="904" y="611" width="734" height="1" fill="#ffffff" />
<rect x="904" y="643" width="734" height="1" fill="#ffffff" />
<rect x="904" y="482" width="734" height="1" fill="#ffffff" />
<rect x="1119" y="365" width="1" height="278" fill="#ffffff" />
<rect x="1330" y="365" width="1" height="278" fill="#ffffff" />
<rect x="1485" y="365" width="1" height="278" fill="#ffffff" />
<rect x="1637" y="365" width="1" height="278" fill="#ffffff" />
<text x="908.5" y="508.2" font-size="23" fill="#000000" textLength="71" lengthAdjust="spacingAndGlyphs">Баунті</text>
<text x="1123.5" y="508.2" font-size="23" fill="#000000" textLength="125.5" lengthAdjust="spacingAndGlyphs">Валентина</text>
<text x="1480" y="508.2" font-size="23" fill="#000000" text-anchor="end">67</text>
<text x="1633" y="508.2" font-size="23" fill="#000000" text-anchor="end">$451 044</text>
<text x="908.5" y="540.2" font-size="23" fill="#000000" textLength="71" lengthAdjust="spacingAndGlyphs">Баунті</text>
<text x="1123.5" y="540.2" font-size="23" fill="#000000" textLength="74.5" lengthAdjust="spacingAndGlyphs">Оріон</text>
<text x="1480" y="540.2" font-size="23" fill="#000000" text-anchor="end">25</text>
<text x="1633" y="540.2" font-size="23" fill="#000000" text-anchor="end">$163 625</text>
<text x="908.5" y="572.2" font-size="23" fill="#000000" textLength="71" lengthAdjust="spacingAndGlyphs">Баунті</text>
<text x="1123.5" y="572.2" font-size="23" fill="#000000" textLength="54" lengthAdjust="spacingAndGlyphs">Ірис</text>
<text x="1480" y="572.2" font-size="23" fill="#000000" text-anchor="end">45</text>
<text x="1633" y="572.2" font-size="23" fill="#000000" text-anchor="end">$336 600</text>
<text x="908.5" y="604.2" font-size="23" fill="#000000" textLength="71" lengthAdjust="spacingAndGlyphs">Баунті</text>
<text x="1123.5" y="604.2" font-size="23" fill="#000000" textLength="70.5" lengthAdjust="spacingAndGlyphs">Ланта</text>
<text x="1480" y="604.2" font-size="23" fill="#000000" text-anchor="end">56</text>
<text x="1633" y="604.2" font-size="23" fill="#000000" text-anchor="end">$366 520</text>
<text x="908.5" y="636.2" font-size="23" fill="#000000" textLength="71" lengthAdjust="spacingAndGlyphs">Баунті</text>
<text x="1123.5" y="636.2" font-size="23" fill="#000000" textLength="157" lengthAdjust="spacingAndGlyphs">Прод-Сервіс</text>
<text x="1480" y="636.2" font-size="23" fill="#000000" text-anchor="end">54</text>
<text x="1633" y="636.2" font-size="23" fill="#000000" text-anchor="end">$383 724</text>
<text x="1010.5" y="416.7" font-size="23.5" fill="#ffffff" font-weight="bold" font-style="italic" text-anchor="middle" textLength="170" lengthAdjust="spacingAndGlyphs">Найменування</text>
<text x="1010.5" y="447.3" font-size="23.5" fill="#ffffff" font-weight="bold" font-style="italic" text-anchor="middle" textLength="90" lengthAdjust="spacingAndGlyphs">товару</text>
<text x="1223.5" y="432.5" font-size="23.5" fill="#ffffff" font-weight="bold" font-style="italic" text-anchor="middle" textLength="174" lengthAdjust="spacingAndGlyphs">Постачальник</text>
<text x="1406.5" y="416.7" font-size="23.5" fill="#ffffff" font-weight="bold" font-style="italic" text-anchor="middle" textLength="69" lengthAdjust="spacingAndGlyphs">Обсяг</text>
<text x="1406.5" y="447.3" font-size="23.5" fill="#ffffff" font-weight="bold" font-style="italic" text-anchor="middle" textLength="115" lengthAdjust="spacingAndGlyphs">партії, т</text>
<text x="1560.0" y="432.5" font-size="23.5" fill="#ffffff" font-weight="bold" font-style="italic" text-anchor="middle" textLength="112" lengthAdjust="spacingAndGlyphs">Витрати</text>
<rect x="78" y="364" width="209" height="2" fill="#217346" />
<rect x="78" y="482" width="209" height="2" fill="#217346" />
<rect x="78" y="364" width="2" height="120" fill="#217346" />
<rect x="285" y="364" width="2" height="120" fill="#217346" />
<rect x="80" y="366" width="205" height="1" fill="#ffffff" />
<rect x="80" y="481" width="205" height="1" fill="#ffffff" />
<rect x="80" y="366" width="1" height="116" fill="#ffffff" />
<rect x="284" y="366" width="1" height="116" fill="#ffffff" />
<rect x="281" y="478" width="8" height="8" fill="#ffffff" />
<rect x="282" y="479" width="6" height="6" fill="#217346" />
<rect x="1889" y="336" width="1" height="632" fill="#9a9a9a" />
<rect x="0" y="967" width="1890" height="1" fill="#9a9a9a" />
<rect x="1890" y="293" width="30" height="675" fill="#e6e6e6" />
<rect x="1892.5" y="309.5" width="24" height="25" fill="#ffffff" stroke="#a8a8a8" stroke-width="1" />
<rect x="1892" y="333" width="25" height="2" fill="#a8a8a8" />
<path d="M1898.5 324 L1904.5 317.5 L1910.5 324 Z" stroke="none" fill="#5f5f5f" stroke-width="1.5" />
<rect x="1892.5" y="335.5" width="24" height="547" fill="#ffffff" stroke="#b4b4b4" stroke-width="1" />
<rect x="1892" y="883" width="25" height="61" fill="#d9d9d9" />
<rect x="1892.5" y="944.5" width="24" height="24" fill="#ffffff" stroke="#b4b4b4" stroke-width="1" />
<path d="M1898.5 953 L1904.5 959 L1910.5 953 Z" stroke="none" fill="#5f5f5f" stroke-width="1.5" />
<rect x="0" y="968" width="1920" height="33" fill="#e6e6e6" />
<path d="M34.5 977.5 L30 983.5 L34.5 989.5 Z" stroke="none" fill="#c2c2c2" stroke-width="1.5" />
<path d="M64.5 977.5 L69 983.5 L64.5 989.5 Z" stroke="none" fill="#a6a6a6" stroke-width="1.5" />
<rect x="118" y="970" width="1" height="29" fill="#8a8a8a" />
<text x="131.5" y="989" font-size="19.5" fill="#444" textLength="59" lengthAdjust="spacingAndGlyphs">Sheet1</text>
<rect x="207.5" y="967" width="88" height="32" fill="#ffffff" />
<rect x="207" y="968" width="1" height="31" fill="#c6c6c6" />
<rect x="295" y="968" width="1" height="31" fill="#c6c6c6" />
<rect x="207.5" y="996" width="88" height="2" fill="#217346" />
<text x="219" y="989" font-size="19.5" fill="#217346" font-weight="bold" textLength="65" lengthAdjust="spacingAndGlyphs">Sheet2</text>
<circle cx="345.75" cy="983.75" r="10.3" fill="none" stroke="#777" stroke-width="1.4"/>
<path d="M340 983.75 H351.5 M345.75 978 V989.5" stroke="#777" fill="none" stroke-width="1.4" />
<rect x="1148" y="977" width="2" height="2" fill="#9a9a9a" />
<rect x="1148" y="983" width="2" height="2" fill="#9a9a9a" />
<rect x="1148" y="989" width="2" height="2" fill="#9a9a9a" />
<rect x="1168.5" y="971.5" width="722" height="24" fill="#ffffff" stroke="#d0d0d0" stroke-width="1" />
<rect x="1193" y="972" width="1" height="23" fill="#d0d0d0" />
<path d="M1184 977.5 L1178 983.5 L1184 989.5 Z" stroke="none" fill="#6b6b6b" stroke-width="1.5" />
<rect x="1809" y="972" width="57" height="23" fill="#dadada" />
<rect x="1866" y="972" width="1" height="23" fill="#d0d0d0" />
<path d="M1876 977.5 L1882 983.5 L1876 989.5 Z" stroke="none" fill="#6b6b6b" stroke-width="1.5" />
<rect x="0" y="1001" width="1920" height="33" fill="#f3f2f1" />
<rect x="0" y="1001" width="1920" height="1" fill="#dcdcdc" />
<rect x="1475" y="1002" width="60" height="32" fill="#c8c8c8" />
<path d="M1495.5 1009.5 H1513.5 V1026.5 H1495.5 Z M1501.5 1009.5 V1026.5 M1507.5 1009.5 V1026.5 M1495.5 1015 H1513.5 M1495.5 1021 H1513.5" stroke="#333" fill="none" stroke-width="1.5" />
<path d="M1555.5 1008.5 H1575.5 V1026.5 H1555.5 Z M1559.5 1012.5 H1571.5 V1022.5 H1559.5 Z M1562 1015 H1569 M1562 1017.5 H1569 M1562 1020 H1569" stroke="#444" fill="none" stroke-width="1.3" />
<path d="M1615.5 1008.5 H1635.5 V1026.5 H1615.5 Z M1615.5 1019.5 H1622.5 V1008.5 M1628.5 1008.5 V1014" stroke="#444" fill="none" stroke-width="1.3" />
<rect x="1663" y="1017" width="12" height="1.5" fill="#555" />
<rect x="1683" y="1017" width="148" height="2" fill="#b0b0b0" />
<rect x="1753" y="1008" width="7" height="19" fill="#777" rx="1" />
<path d="M1838 1017.5 H1851 M1844.5 1011 V1024" stroke="#555" fill="none" stroke-width="1.5" />
<text x="1869" y="1024" font-size="16.5" fill="#444" textLength="40" lengthAdjust="spacingAndGlyphs">100%</text>
</svg></body></html>
